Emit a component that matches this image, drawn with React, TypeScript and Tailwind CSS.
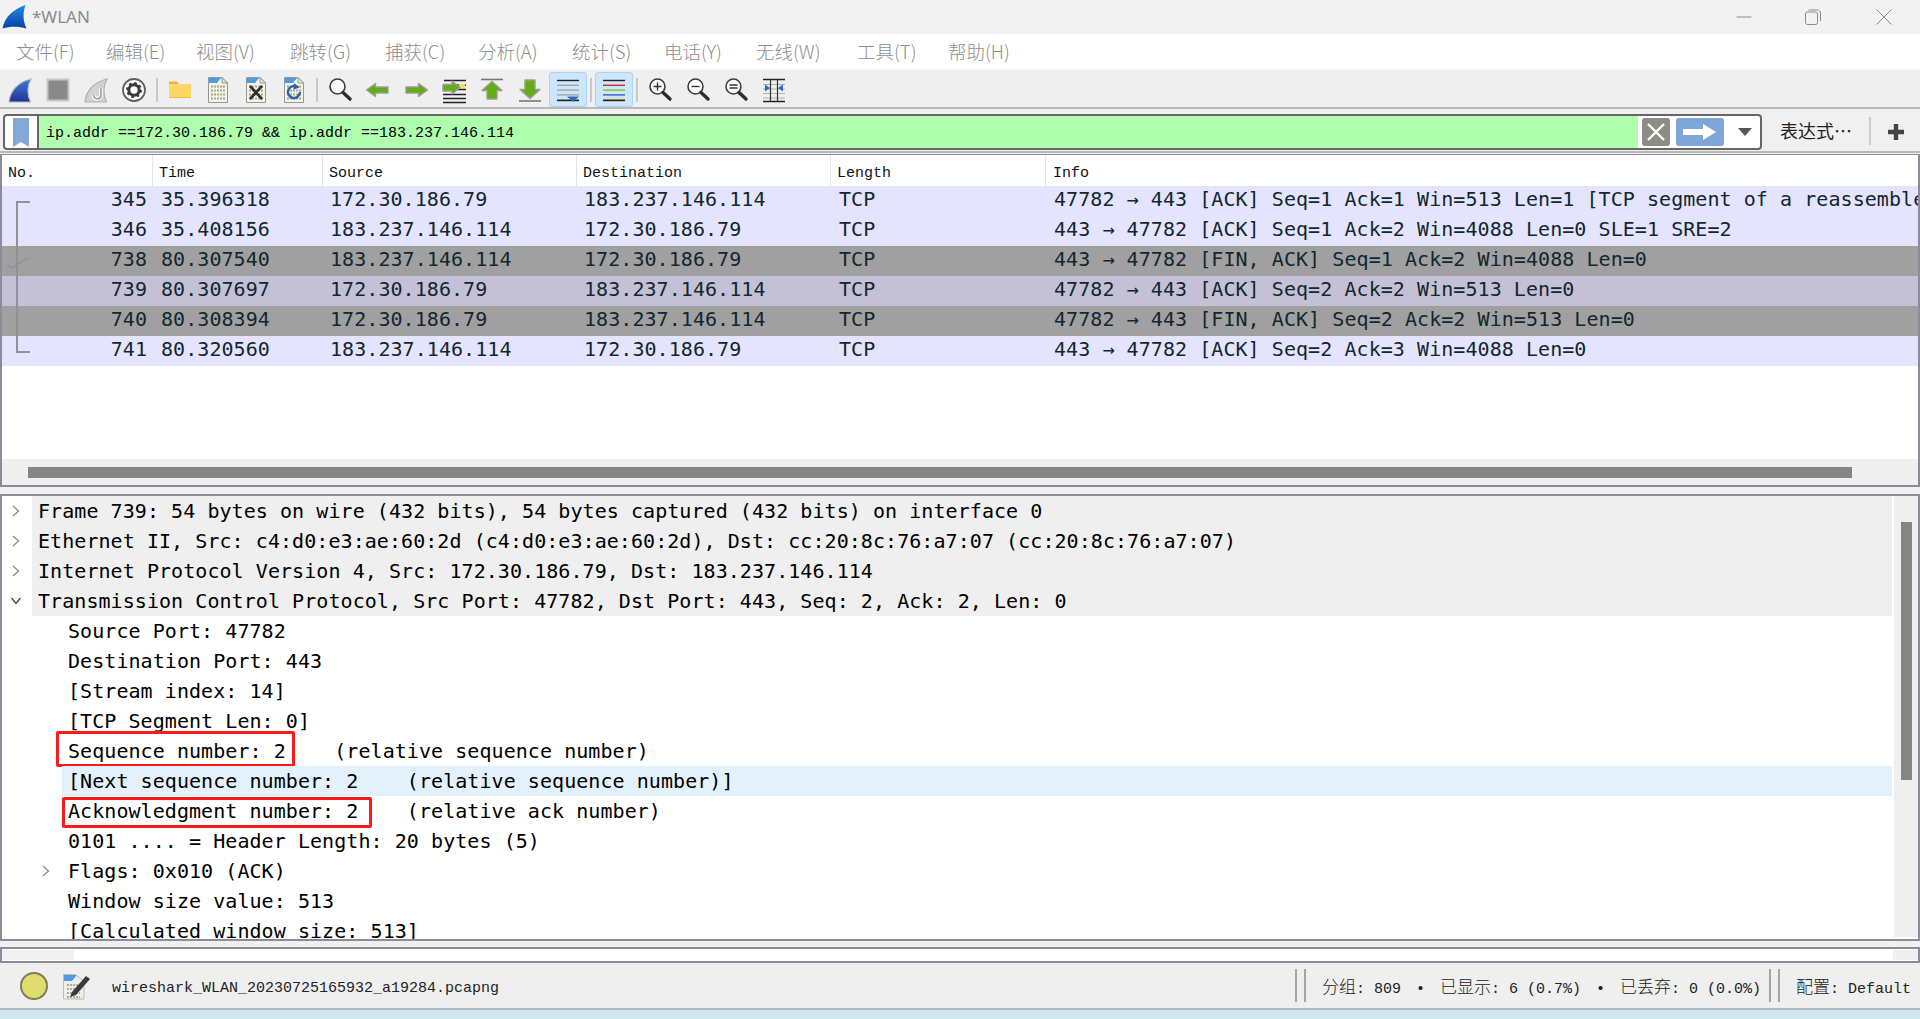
import React from "react";

const MONO = "font-['DejaVu_Sans_Mono',monospace] tracking-[0.06px]";
const SMALL = "font-['Liberation_Mono','Noto_Sans_CJK_SC',monospace]";

const menus = [
  { label: "文件(F)", w: "w-[90px]" },
  { label: "编辑(E)", w: "w-[90px]" },
  { label: "视图(V)", w: "w-[94px]" },
  { label: "跳转(G)", w: "w-[95px]" },
  { label: "捕获(C)", w: "w-[93px]" },
  { label: "分析(A)", w: "w-[94px]" },
  { label: "统计(S)", w: "w-[92px]" },
  { label: "电话(Y)", w: "w-[92px]" },
  { label: "无线(W)", w: "w-[101px]" },
  { label: "工具(T)", w: "w-[91px]" },
  { label: "帮助(H)", w: "w-[80px]" },
];

const packets = [
  { no: 345, time: "35.396318", src: "172.30.186.79", dst: "183.237.146.114", info: "47782 → 443 [ACK] Seq=1 Ack=1 Win=513 Len=1 [TCP segment of a reassembled PDU]", bg: "bg-[#e4e4ff]" },
  { no: 346, time: "35.408156", src: "183.237.146.114", dst: "172.30.186.79", info: "443 → 47782 [ACK] Seq=1 Ack=2 Win=4088 Len=0 SLE=1 SRE=2", bg: "bg-[#e4e4ff]" },
  { no: 738, time: "80.307540", src: "183.237.146.114", dst: "172.30.186.79", info: "443 → 47782 [FIN, ACK] Seq=1 Ack=2 Win=4088 Len=0", bg: "bg-[#a0a0a0]" },
  { no: 739, time: "80.307697", src: "172.30.186.79", dst: "183.237.146.114", info: "47782 → 443 [ACK] Seq=2 Ack=2 Win=513 Len=0", bg: "bg-[#c4c1d7]" },
  { no: 740, time: "80.308394", src: "172.30.186.79", dst: "183.237.146.114", info: "47782 → 443 [FIN, ACK] Seq=2 Ack=2 Win=513 Len=0", bg: "bg-[#a0a0a0]" },
  { no: 741, time: "80.320560", src: "183.237.146.114", dst: "172.30.186.79", info: "443 → 47782 [ACK] Seq=2 Ack=3 Win=4088 Len=0", bg: "bg-[#e4e4ff]" },
];

const details = [
  { text: "Frame 739: 54 bytes on wire (432 bits), 54 bytes captured (432 bits) on interface 0", top: true },
  { text: "Ethernet II, Src: c4:d0:e3:ae:60:2d (c4:d0:e3:ae:60:2d), Dst: cc:20:8c:76:a7:07 (cc:20:8c:76:a7:07)", top: true },
  { text: "Internet Protocol Version 4, Src: 172.30.186.79, Dst: 183.237.146.114", top: true },
  { text: "Transmission Control Protocol, Src Port: 47782, Dst Port: 443, Seq: 2, Ack: 2, Len: 0", top: true, open: true },
  { text: "Source Port: 47782" },
  { text: "Destination Port: 443" },
  { text: "[Stream index: 14]" },
  { text: "[TCP Segment Len: 0]" },
  { text: "Sequence number: 2    (relative sequence number)", box: "seq" },
  { text: "[Next sequence number: 2    (relative sequence number)]", hl: true },
  { text: "Acknowledgment number: 2    (relative ack number)", box: "ack" },
  { text: "0101 .... = Header Length: 20 bytes (5)" },
  { text: "Flags: 0x010 (ACK)", sub: true },
  { text: "Window size value: 513" },
  { text: "[Calculated window size: 513]" },
];

const Icon = ({ children }: { children: React.ReactNode }) => (
  <svg width="30" height="30" viewBox="0 0 30 30" fill="none">
    {children}
  </svg>
);

const Tool = ({ active, children }: { active?: boolean; children: React.ReactNode }) => (
  <div className={`flex h-[35px] w-[38px] items-center justify-center rounded-[3px] ${active ? "border border-[#a8d4f7] bg-[#cbe6fd]" : ""}`}>
    {children}
  </div>
);

const Sep = () => (
  <div className="flex h-[35px] w-[8px] items-center justify-center">
    <div className="h-[24px] w-[2px] bg-[#c8c8c8]" />
  </div>
);

const FileBase = () => (
  <>
    <path d="M5.5 2.5H19L24.5 8V27.5H5.5Z" fill="#f6f3dc" stroke="#8f9a9e" />
    <path d="M6 3H18L14 8H6Z" fill="#4d9be0" />
    <path d="M19 2.5V8H24.5Z" fill="#dfe6e8" stroke="#8f9a9e" />
    <path d="M8 11.5H22M8 15.5H22M8 19.5H22M8 23.5H22" stroke="#a3a79e" strokeWidth="2" strokeDasharray="2 1" />
  </>
);

const GreenArrow = ({ d }: { d: string }) => (
  <path d={d} fill="#63ad12" stroke="#9a9f98" strokeWidth="1.4" strokeLinejoin="round" />
);

const Lens = ({ mark }: { mark?: React.ReactNode }) => (
  <>
    <circle cx="12.5" cy="11.5" r="7.5" fill="#fff" stroke="#3c3c3c" strokeWidth="1.6" />
    <path d="M18 17.5L25 24" stroke="#2c2c2c" strokeWidth="3.4" strokeLinecap="round" />
    {mark}
  </>
);

const Lines = ({ colors }: { colors: string[] }) => (
  <>
    {colors.map((c, i) => (
      <path key={i} d={`M4 ${5.5 + i * 4.8}H26`} stroke={c} strokeWidth="1.4" />
    ))}
  </>
);

const Toolbar = () => (
  <div className="flex h-[36px] bg-[#efefef] pl-px pt-px">
    <Tool>
      <Icon>
        <defs>
          <linearGradient id="fin" x1="0" y1="0" x2="0" y2="1">
            <stop offset="0" stopColor="#3f7fd8" />
            <stop offset="1" stopColor="#1f2f9c" />
          </linearGradient>
        </defs>
        <path d="M4 27C5 16 13 7 26 4C22 11 22 20 25.5 27Z" fill="url(#fin)" stroke="#b5b5b5" strokeWidth="1.2" />
      </Icon>
    </Tool>
    <Tool>
      <Icon>
        <rect x="4.5" y="4.5" width="21" height="21" fill="#8a8a8a" stroke="#c6c6c6" strokeWidth="2" />
      </Icon>
    </Tool>
    <Tool>
      <Icon>
        <path d="M4 27C5 16 13 7 26 4C22 11 22 20 25.5 27Z" fill="#d2d2d2" stroke="#b0b0b0" strokeWidth="1.2" />
        <path d="M20 13V20C20 25 13 25 12.5 20" stroke="#fff" strokeWidth="3.6" />
        <path d="M20 13V20C20 25 13 25 12.5 20" stroke="#8f8f8f" strokeWidth="1.4" />
      </Icon>
    </Tool>
    <Tool>
      <Icon>
        <circle cx="15" cy="15" r="11" fill="#fff" stroke="#5e5e5e" strokeWidth="1.8" />
        <circle cx="15" cy="15" r="5.2" fill="none" stroke="#3a3a3a" strokeWidth="3" />
        <circle cx="15" cy="15" r="7" fill="none" stroke="#3a3a3a" strokeWidth="2" strokeDasharray="2.6 2.9" />
      </Icon>
    </Tool>
    <Sep />
    <Tool>
      <Icon>
        <path d="M4 6.5H12L14 9H4Z" fill="#efb23a" />
        <rect x="4" y="9" width="22" height="14" fill="#fbd866" />
        <path d="M4 22.5H26" stroke="#eeb53f" />
      </Icon>
    </Tool>
    <Tool>
      <Icon>
        <FileBase />
      </Icon>
    </Tool>
    <Tool>
      <Icon>
        <FileBase />
        <path d="M9 11L21 24M21 11L9 24" stroke="#2e2e2e" strokeWidth="2.6" />
      </Icon>
    </Tool>
    <Tool>
      <Icon>
        <FileBase />
        <path d="M19 12.5A6 6 0 1 0 21 17" stroke="#2a62a8" strokeWidth="2.4" />
        <path d="M15 8L20.5 12.5L14.5 14.5Z" fill="#2a62a8" />
      </Icon>
    </Tool>
    <Sep />
    <Tool>
      <Icon>
        <Lens />
      </Icon>
    </Tool>
    <Tool>
      <Icon>
        <GreenArrow d="M3.5 15L12.5 8.5V12H25V18H12.5V21.5Z" />
      </Icon>
    </Tool>
    <Tool>
      <Icon>
        <GreenArrow d="M26.5 15L17.5 8.5V12H5V18H17.5V21.5Z" />
      </Icon>
    </Tool>
    <Tool>
      <Icon>
        <path d="M5 5.5H27M16 10H27M16 14.5H27M4 19.5H27M4 23.5H27M4 27.5H27" stroke="#222" strokeWidth="1.3" />
        <rect x="20" y="9" width="6" height="3.5" fill="#f4e23a" />
        <GreenArrow d="M21 12.5L13 6V9.5H4V16H13V19Z" />
      </Icon>
    </Tool>
    <Tool>
      <Icon>
        <path d="M4 4.5H26" stroke="#777" strokeWidth="1.6" />
        <GreenArrow d="M15 6.5L25 15.5H20V24H10V15.5H5Z" />
      </Icon>
    </Tool>
    <Tool>
      <Icon>
        <path d="M4 26H26" stroke="#777" strokeWidth="1.6" />
        <GreenArrow d="M15 23.5L25 14.5H20V5H10V14.5H5Z" />
      </Icon>
    </Tool>
    <Tool active>
      <Icon>
        <Lines colors={["#222", "#a3a3a3", "#a3a3a3", "#a3a3a3", "#a3a3a3"]} />
        <path d="M4 25.5H26" stroke="#222" strokeWidth="1.4" />
        <path d="M14 21.5H26L20 27Z" fill="#336cb0" />
      </Icon>
    </Tool>
    <Sep />
    <Tool active>
      <Icon>
        <Lines colors={["#222", "#e32222", "#7ac70c", "#3a5db0", "#c99a2e"]} />
        <path d="M4 25.5H26" stroke="#222" strokeWidth="1.4" />
      </Icon>
    </Tool>
    <Sep />
    <Tool>
      <Icon>
        <Lens mark={<path d="M12.5 7.5V15.5M8.5 11.5H16.5" stroke="#333" strokeWidth="1.4" />} />
      </Icon>
    </Tool>
    <Tool>
      <Icon>
        <Lens mark={<path d="M8.5 11.5H16.5" stroke="#333" strokeWidth="1.4" />} />
      </Icon>
    </Tool>
    <Tool>
      <Icon>
        <Lens mark={<path d="M8.5 10H16.5M8.5 13H16.5" stroke="#333" strokeWidth="1.4" />} />
      </Icon>
    </Tool>
    <Tool>
      <Icon>
        <path d="M4 4.5H26M4 26.5H26" stroke="#222" strokeWidth="1.4" />
        <path d="M4 9.5H26M4 14H26M4 18.5H26M4 23H26" stroke="#b0b0b0" strokeWidth="1.2" />
        <path d="M11.5 4V27M18.5 4V27" stroke="#333" strokeWidth="1.2" />
        <path d="M6 9.5L11 13L6 16.5ZM24 9.5L19 13L24 16.5Z" fill="#2f6cb3" />
      </Icon>
    </Tool>
  </div>
);

const Chevron = ({ open, className }: { open?: boolean; className: string }) => (
  <svg width="10" height="12" viewBox="0 0 10 12" fill="none" className={className}>
    {open ? (
      <path d="M0.5 3L5 8.5L9.5 3" stroke="#444" strokeWidth="1.3" />
    ) : (
      <path d="M2 1L7.5 6L2 11" stroke="#8c8c8c" strokeWidth="1.3" />
    )}
  </svg>
);

const Header = ({ w, label }: { w: string; label: string }) => (
  <div className={`flex h-full items-center border-r border-[#e3e3e3] pl-[6px] pt-[7px] ${w}`}>{label}</div>
);

const PacketList = () => (
  <div className="relative h-[333px] shrink-0 overflow-hidden border-x-2 border-t border-b-2 border-[#8b8b99] bg-white text-[#12272e]">
    <div className={`flex h-[31px] items-center text-[15px] text-[#111] ${SMALL}`}>
      <Header w="w-[151px]" label="No." />
      <Header w="w-[170px]" label="Time" />
      <Header w="w-[254px]" label="Source" />
      <Header w="w-[254px]" label="Destination" />
      <Header w="w-[215px]" label="Length" />
      <div className="pl-[7px] pt-[7px]">Info</div>
    </div>
    <div className={`h-[180px] text-[20px] leading-[26px] ${MONO}`}>
      {packets.map((p) => (
        <div key={p.no} className={`flex h-[30px] overflow-hidden whitespace-pre ${p.bg}`}>
          <div className="w-[145px] shrink-0 text-right">{p.no}</div>
          <div className="ml-[14px] w-[169px] shrink-0">{p.time}</div>
          <div className="w-[254px] shrink-0">{p.src}</div>
          <div className="w-[255px] shrink-0">{p.dst}</div>
          <div className="w-[215px] shrink-0">TCP</div>
          <div className="shrink-0">{p.info}</div>
        </div>
      ))}
    </div>
    <svg width="34" height="170" viewBox="0 0 34 170" fill="none" className="absolute left-0 top-[46px]">
      <path d="M28 1H15V151H28" stroke="#8a9499" strokeWidth="2" />
      <path d="M5 65L10 67L26 57" stroke="#8a9499" strokeWidth="1.5" />
    </svg>
    <div className="absolute bottom-0 left-0 right-0 flex h-[26px] items-center bg-[#efefef] pl-[26px] pr-[66px]">
      <div className="h-[11px] w-full bg-[#858585]" />
    </div>
  </div>
);

const DetailRow = ({ d }: { d: (typeof details)[number] }) => {
  const indent = d.top ? "pl-[6px]" : "pl-[36px]";
  return (
    <div className={`relative ml-[30px] flex h-[30px] shrink-0 whitespace-pre ${d.top ? "bg-[#efefef]" : ""} ${indent}`}>
      {d.hl && <div className="absolute inset-y-0 left-[30px] right-0 bg-[#e3f1fd]" />}
      {d.top && <Chevron open={d.open} className="absolute left-[-21px] top-[9px]" />}
      {d.sub && <Chevron className="absolute left-[9px] top-[9px]" />}
      <span className="relative">{d.text}</span>
      {d.box === "seq" && <div className="absolute left-[24px] top-[-5px] h-[36px] w-[239px] rounded-[2px] border-[3px] border-[#fb1a1a]" />}
      {d.box === "ack" && <div className="absolute left-[30px] top-[1px] h-[31px] w-[310px] rounded-[2px] border-[3px] border-[#fb1a1a]" />}
    </div>
  );
};

const DetailPane = () => (
  <div className="relative mt-[7px] h-[447px] shrink-0 overflow-hidden border-2 border-[#8b8b99] bg-white">
    <div className={`flex h-full flex-col pr-[26px] text-[20px] leading-[30px] text-black ${MONO}`}>
      {details.map((d) => (
        <DetailRow key={d.text} d={d} />
      ))}
    </div>
    <div className="absolute bottom-[2px] right-0 top-0 w-[25px] border-l border-white bg-[#efefef] pl-[7px] pt-[26px]">
      <div className="h-[258px] w-[11px] bg-[#858585]" />
    </div>
  </div>
);

const Cjk = ({ children }: { children: React.ReactNode }) => (
  <span className="font-['Noto_Sans_CJK_SC',sans-serif] text-[17px] font-light">{children}</span>
);

export default function App() {
  return (
    <div className="flex h-[1019px] w-[1920px] flex-col overflow-hidden bg-[#f0f0f0]">
      {/* title bar */}
      <div className="flex h-[34px] shrink-0 items-center bg-[#f2f2f2]">
        <svg width="26" height="26" viewBox="0 0 26 26" className="ml-[2px]">
          <defs>
            <linearGradient id="shark" x1="0" y1="0" x2="0" y2="1">
              <stop offset="0" stopColor="#1a8cec" />
              <stop offset="1" stopColor="#0b3fa0" />
            </linearGradient>
          </defs>
          <path d="M0.5 24.5C2 14 11 5 23.5 1C20.5 9 21 17 24.5 24.5C16 22 8 22 0.5 24.5Z" fill="url(#shark)" />
        </svg>
        <span className="ml-[4px] font-['Noto_Sans',sans-serif] text-[17px] text-[#8a8a8a]">*WLAN</span>
        <div className="ml-auto flex items-center">
          <svg width="16" height="16" viewBox="0 0 16 16" fill="none" className="mr-[53px]">
            <path d="M0.5 8H15.5" stroke="#8a8a8a" />
          </svg>
          <svg width="16" height="16" viewBox="0 0 16 16" fill="none" className="mr-[55px]">
            <rect x="0.5" y="3" width="12" height="12.5" rx="2" stroke="#8a8a8a" />
            <path d="M3.5 1H12.5C14 1 15.5 2.5 15.5 4V12" stroke="#8a8a8a" />
          </svg>
          <svg width="16" height="16" viewBox="0 0 16 16" fill="none" className="mr-[28px]">
            <path d="M0.5 0.5L15.5 15.5M15.5 0.5L0.5 15.5" stroke="#8a8a8a" />
          </svg>
        </div>
      </div>

      {/* menu */}
      <div className="flex h-[35px] shrink-0 items-center bg-white pl-[16px] font-['Noto_Sans_CJK_SC',sans-serif] text-[18.5px] font-light text-[#8e8e8e]">
        {menus.map((m) => (
          <span key={m.label} className={`shrink-0 ${m.w}`}>
            {m.label}
          </span>
        ))}
      </div>
      <div className="h-[2px] shrink-0 bg-[#f6f6f6]" />

      <Toolbar />
      <div className="h-[2px] shrink-0 bg-[#b8b8b8]" />

      {/* display filter */}
      <div className="flex h-[42px] shrink-0 items-start bg-[#f0f0f0] pl-[3px] pt-[5px]">
        <div className="flex h-[36px] w-[1759px] items-stretch overflow-hidden rounded-[4px] border-2 border-[#666] bg-white">
          <div className="flex w-[34px] items-center justify-center border-r-2 border-[#666]">
            <svg width="16" height="29" viewBox="0 0 16 29">
              <path d="M0 0H16V29L8 24L0 29Z" fill="#84a9d8" />
            </svg>
          </div>
          <div className={`flex-1 bg-[#afffaf] pl-[7px] text-[15px] leading-[36px] text-black ${SMALL}`}>
            ip.addr ==172.30.186.79 &amp;&amp; ip.addr ==183.237.146.114
          </div>
          <div className="flex items-center gap-[6px] pl-[4px]">
            <div className="flex h-[28px] w-[28px] items-center justify-center rounded-[3px] bg-[#8c8c85]">
              <svg width="20" height="20" viewBox="0 0 20 20">
                <path d="M2 2L18 18M18 2L2 18" stroke="#fff" strokeWidth="2.4" />
              </svg>
            </div>
            <div className="flex h-[28px] w-[48px] items-center justify-center rounded-[3px] bg-[#7ea6d6]">
              <svg width="34" height="16" viewBox="0 0 34 16">
                <path d="M0 5H20V0L33 8L20 16V11H0Z" fill="#fff" />
              </svg>
            </div>
            <div className="flex w-[30px] items-center justify-center">
              <svg width="14" height="8" viewBox="0 0 14 8">
                <path d="M0 0H14L7 8Z" fill="#555" />
              </svg>
            </div>
          </div>
        </div>
        <span className="ml-[18px] mt-[3px] font-['Noto_Sans_CJK_SC',sans-serif] text-[18px] leading-[26px] text-[#222]">表达式…</span>
        <div className="ml-[17px] mt-[3px] h-[28px] w-[2px] bg-[#cacaca]" />
        <svg width="16" height="16" viewBox="0 0 16 16" className="ml-[17px] mt-[10px]">
          <path d="M0 8H16M8 0V16" stroke="#444" strokeWidth="4.4" />
        </svg>
      </div>
      <div className="h-[2px] shrink-0 bg-[#b8b8b8]" />

      <div className="h-px shrink-0" />
      <PacketList />
      <DetailPane />

      {/* packet bytes, collapsed */}
      <div className="mt-[6px] flex h-[16px] shrink-0 items-center justify-between border-2 border-[#8b8b99] bg-white">
        <div className="h-[10px] w-[72px] bg-[#f0f0f0]" />
        <div className="h-[10px] w-[25px] bg-[#efefef]" />
      </div>

      {/* status bar */}
      <div className="flex h-[45px] shrink-0 items-center bg-[#efefef]">
        <div className="ml-[20px] h-[28px] w-[28px] rounded-full border-2 border-[#7d7d5a] bg-[#dfdc70]" />
        <svg width="28" height="30" viewBox="0 0 28 30" className="ml-[15px]">
          <path d="M0.5 3.5H12L21 10V28H0.5Z" fill="#eef0e8" stroke="#b8bdb8" />
          <path d="M1 4H14L9 10H1Z" fill="#4d9be0" />
          <path d="M4 14H17M4 18H17M4 22H17M4 26H17" stroke="#aaa" strokeWidth="2" strokeDasharray="2 1" />
          <path d="M9 21L23 5L27 8L13 24L7 26Z" fill="#3a3a3a" />
        </svg>
        <span className={`ml-[21px] pt-[7px] text-[15px] text-[#222] ${SMALL}`}>wireshark_WLAN_20230725165932_a19284.pcapng</span>
        <div className="ml-auto flex h-[33px] items-center gap-[7px]">
          <div className="h-full w-[2px] bg-[#a5a5a5]" />
          <div className="h-full w-[2px] bg-[#a5a5a5]" />
        </div>
        <div className={`ml-[16px] flex w-[447px] items-baseline gap-[15px] whitespace-pre pt-[3px] text-[15px] text-[#222] ${SMALL}`}>
          <span><Cjk>分组</Cjk>: 809</span>
          <span>•</span>
          <span><Cjk>已显示</Cjk>: 6 (0.7%)</span>
          <span>•</span>
          <span><Cjk>已丢弃</Cjk>: 0 (0.0%)</span>
        </div>
        <div className="flex h-[33px] items-center gap-[7px]">
          <div className="h-full w-[2px] bg-[#a5a5a5]" />
          <div className="h-full w-[2px] bg-[#a5a5a5]" />
        </div>
        <span className={`ml-[16px] mr-[8px] w-[116px] whitespace-pre pt-[3px] text-[15px] text-[#222] ${SMALL}`}><Cjk>配置</Cjk>: Default</span>
      </div>
      <div className="h-[2px] shrink-0 bg-[#aebcc0]" />
      <div className="flex-1 bg-[#cfe7ee]" />
    </div>
  );
}
